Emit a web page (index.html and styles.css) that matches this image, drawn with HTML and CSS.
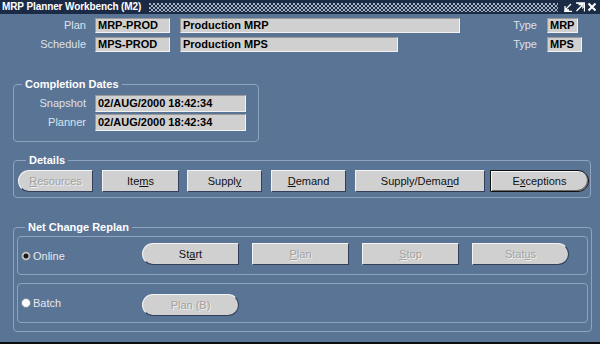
FILE: index.html
```html
<!DOCTYPE html>
<html>
<head>
<meta charset="utf-8">
<link rel="stylesheet" href="styles.css">
</head>
<body>
<div class="window">
  <div class="titlebar">
    <span class="title">MRP Planner Workbench (M2)</span>
    <span class="dots"></span>
    <span class="ctls">
      <svg width="10" height="10" viewBox="0 0 10 10"><path d="M8 2 L2.5 7.5 M2 4 V8 H6 M1 9.5 H9" stroke="#fff" stroke-width="1.3" fill="none"/></svg>
      <svg width="10" height="10" viewBox="0 0 10 10"><path d="M1.5 9 L7 3.5 M3.5 2.5 H8 V7 M1 1 H9.5 V9.5" stroke="#fff" stroke-width="1.3" fill="none"/></svg>
      <svg width="10" height="10" viewBox="0 0 10 10"><path d="M1.5 1.5 L8.5 8.5 M8.5 1.5 L1.5 8.5" stroke="#fff" stroke-width="2" fill="none"/></svg>
    </span>
  </div>

  <div class="hgrid">
    <span class="lbl">Plan</span>
    <span class="fld w75">MRP-PROD</span>
    <span class="fld w280">Production MRP</span>
    <span class="lbl tlbl">Type</span>
    <span class="fld w31">MRP</span>

    <span class="lbl">Schedule</span>
    <span class="fld w75">MPS-PROD</span>
    <span class="fld w218">Production MPS</span>
    <span class="lbl tlbl">Type</span>
    <span class="fld w35">MPS</span>
  </div>

  <fieldset class="grp grp-dates">
    <legend>Completion Dates</legend>
    <div class="dgrid">
      <span class="lbl">Snapshot</span>
      <span class="fld dfld">02/AUG/2000 18:42:34</span>
      <span class="lbl">Planner</span>
      <span class="fld dfld">02/AUG/2000 18:42:34</span>
    </div>
  </fieldset>

  <fieldset class="grp grp-details">
    <legend>Details</legend>
    <div class="btnrow">
      <button class="btn b-res pill-l off"><u>R</u>esources</button>
      <button class="btn b-items">Ite<u>m</u>s</button>
      <button class="btn b-supply">Suppl<u>y</u></button>
      <button class="btn b-demand"><u>D</u>emand</button>
      <button class="btn b-sd">Supply/Dema<u>n</u>d</button>
      <button class="btn b-exc pill-r dflt">E<u>x</u>ceptions</button>
    </div>
  </fieldset>

  <fieldset class="grp grp-net">
    <legend>Net Change Replan</legend>
    <div class="sub sub-online">
      <span class="opt"><span class="radio on"></span>Online</span>
      <button class="btn nb pill-l">St<u>a</u>rt</button>
      <button class="btn nb off"><u>P</u>lan</button>
      <button class="btn nb off"><u>S</u>top</button>
      <button class="btn nb pill-r off">Stat<u>u</u>s</button>
    </div>
    <div class="sub sub-batch">
      <span class="opt"><span class="radio"></span>Batch</span>
      <button class="btn nb pill off">Plan (B)</button>
    </div>
  </fieldset>
</div>
</body>
</html>
```

FILE: styles.css
```css
html, body {
  margin: 0;
  padding: 0;
  background: #5a7496;
}
body {
  font-family: "Liberation Sans", Arial, sans-serif;
  font-size: 11px;
}
.window {
  width: 600px;
  height: 344px;
  box-sizing: border-box;
  background: #5a7496;
  border-bottom: 2px solid #0e0e0e;
  overflow: hidden;
}

/* title bar */
.titlebar {
  height: 14px;
  background: #1b2b46;
  display: flex;
  align-items: center;
}
.title {
  color: #fff;
  font-weight: bold;
  font-size: 10px;
  letter-spacing: -0.1px;
  padding-left: 2px;
  white-space: nowrap;
  line-height: 14px;
}
.dots {
  flex: 1;
  height: 9px;
  margin: 0 5px 0 8px;
  background-image:
    radial-gradient(circle at 1px 1px, #a4b0c2 0.8px, transparent 1px),
    radial-gradient(circle at 1px 1px, #a4b0c2 0.8px, transparent 1px);
  background-size: 4px 4px, 4px 4px;
  background-position: 0 0, 2px 2px;
}
.ctls {
  display: flex;
  gap: 2px;
  padding-right: 3px;
}
.ctls svg { display: block; }

/* labels / fields */
.lbl {
  color: #dde2e9;
  text-align: right;
  padding-right: 9px;
  line-height: 15px;
  white-space: nowrap;
}
.fld {
  box-sizing: border-box;
  background: #d0d0d0;
  border: 1px solid;
  border-color: #9a9a9a #f2f2f2 #f2f2f2 #9a9a9a;
  color: #000;
  font-weight: bold;
  padding-left: 2px;
  white-space: nowrap;
  overflow: hidden;
}

.hgrid {
  display: grid;
  grid-template-columns: 95px 85px 1fr 50px 53px;
  grid-auto-rows: 15px;
  row-gap: 4px;
  padding-top: 4px;
}
.hgrid .fld { line-height: 13px; }
.tlbl { padding-right: 10px; }
.w75 { width: 75px; }
.w280 { width: 280px; }
.w218 { width: 218px; }
.w31 { width: 31px; }
.w35 { width: 35px; }

/* group boxes */
.grp {
  margin: 0 0 0 13px;
  padding: 0;
  border: 1px solid #8fa3bf;
  border-radius: 4px;
  min-inline-size: 0;
}
.grp legend {
  color: #fff;
  font-weight: bold;
  font-size: 11px;
  line-height: 12px;
  padding: 0 3px;
  margin-left: 8px;
}
.grp-dates {
  width: 246px;
  box-sizing: border-box;
  margin-top: 26px;
  padding: 5px 0 10px 0;
}
.dgrid {
  display: grid;
  grid-template-columns: 81px 151px;
  grid-auto-rows: 17px;
  row-gap: 2px;
}
.dgrid .lbl { line-height: 17px; }
.dgrid .fld { line-height: 15px; }

.grp-details {
  width: 578px;
  box-sizing: border-box;
  margin-top: 12px;
  padding: 4px 0 5px 4px;
}
.btnrow {
  display: flex;
  gap: 8px;
}
.btn {
  box-sizing: border-box;
  height: 22px;
  margin: 0;
  padding: 0;
  background: #d0d0d0;
  border: 1px solid;
  border-color: #f4f4f4 #34405a #34405a #f4f4f4;
  font-family: "Liberation Sans", Arial, sans-serif;
  font-size: 11px;
  color: #111;
}
.btn u { text-underline-offset: 1px; }
.off {
  color: #a2a2a2;
  text-shadow: 1px 1px 0 #efefef;
}
.pill-l { border-radius: 11px 0 0 11px; }
.pill-r { border-radius: 0 11px 11px 0; }
.pill { border-radius: 11px; }
.dflt {
  border: 1px solid #101010;
  box-shadow: inset 1px 1px 0 #f6f6f6, inset -1px -1px 0 #6a6a6a;
}
.b-res { width: 75px; }
.b-items { width: 77px; margin-left: 1px; }
.b-supply { width: 75px; }
.b-demand { width: 75px; margin-left: 1px; }
.b-sd { width: 130px; margin-left: 1px; }
.b-exc { width: 99px; margin-left: -3px; }

.grp-net {
  width: 579px;
  box-sizing: border-box;
  margin-top: 23px;
  padding: 3px 3px 8px 3px;
  display: flex;
  flex-direction: column;
  gap: 8px;
}
.sub {
  box-sizing: border-box;
  border: 1px solid #8fa3bf;
  border-radius: 4px;
  display: flex;
  align-items: center;
  padding-left: 3px;
}
.sub-online { height: 39px; gap: 13px; }
.sub-batch { height: 40px; }
.opt {
  width: 121px;
  display: flex;
  align-items: center;
  gap: 2px;
  color: #e6e9ee;
  font-size: 11px;
}
.sub-online .opt { margin-right: -13px; }
.radio {
  width: 10px;
  height: 10px;
  box-sizing: border-box;
  border-radius: 50%;
  border: 1px solid #7d8797;
  background: #fff;
}
.radio.on {
  background: radial-gradient(circle, #1a1a1a 0 2.2px, #c9c9c9 2.8px);
}
.nb { width: 97px; }
.sub-online .btn { margin-top: -3px; }
.sub-batch .btn { margin-top: 3px; }
```
